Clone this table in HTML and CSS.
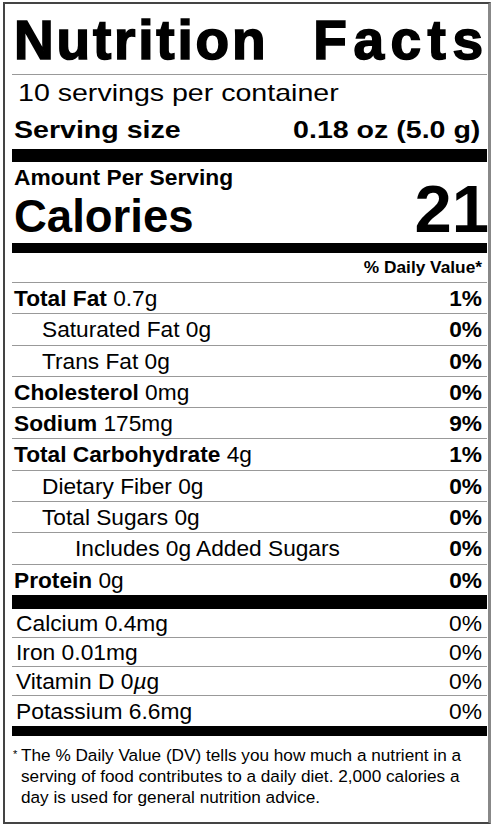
FILE: index.html
```html
<!DOCTYPE html>
<html>
<head>
<meta charset="utf-8">
<link rel="stylesheet" href="styles.css">
</head>
<body>
<div class="label">
  <div class="title"><span class="t1">Nutrition</span><span class="t2">Facts</span></div>
  <div class="servings"><span class="stretch">10 servings per container</span></div>
  <div class="size-row"><span class="stretch">Serving size</span><span class="stretch right">0.18 oz (5.0 g)</span></div>
  <div class="bar bar13"></div>
  <div class="amount">Amount Per Serving</div>
  <div class="calories"><span class="cal-label">Calories</span><span class="cal-num">21</span></div>
  <div class="bar bar10"></div>
  <div class="dvhead">% Daily Value*</div>
  <div class="row"><span><b>Total Fat</b> 0.7g</span><span class="dv">1%</span></div>
  <div class="row ind1"><span>Saturated Fat 0g</span><span class="dv">0%</span></div>
  <div class="row ind1"><span>Trans Fat 0g</span><span class="dv">0%</span></div>
  <div class="row"><span><b>Cholesterol</b> 0mg</span><span class="dv">0%</span></div>
  <div class="row"><span><b>Sodium</b> 175mg</span><span class="dv">9%</span></div>
  <div class="row"><span><b>Total Carbohydrate</b> 4g</span><span class="dv">1%</span></div>
  <div class="row ind1"><span>Dietary Fiber 0g</span><span class="dv">0%</span></div>
  <div class="row ind1"><span>Total Sugars 0g</span><span class="dv">0%</span></div>
  <div class="row ind2"><span>Includes 0g Added Sugars</span><span class="dv">0%</span></div>
  <div class="row last"><span><b>Protein</b> 0g</span><span class="dv">0%</span></div>
  <div class="bar bar14"></div>
  <div class="vrow"><span>Calcium 0.4mg</span><span>0%</span></div>
  <div class="vrow"><span>Iron 0.01mg</span><span>0%</span></div>
  <div class="vrow"><span>Vitamin D 0<i>µ</i>g</span><span>0%</span></div>
  <div class="vrow last"><span>Potassium 6.6mg</span><span>0%</span></div>
  <div class="bar bar10"></div>
  <p class="foot"><span class="star">*</span>The % Daily Value (DV) tells you how much a nutrient in a serving of food contributes to a daily diet. 2,000 calories a day is used for general nutrition advice.</p>
</div>
</body>
</html>
```

FILE: styles.css
```css
body {
  margin: 0;
  background: #fff;
  color: #000;
  font-family: "Liberation Sans", Arial, sans-serif;
}

.label {
  margin: 2px 0 0 3px;
  width: 475px;
  border: 2px solid #444;
  border-right: 3px solid #888;
  padding: 0 1px 0 7px;
}

.title {
  display: flex;
  justify-content: space-between;
  height: 68px;
  line-height: 68px;
  padding: 2px 4px 0 2px;
  font-size: 55px;
  font-weight: bold;
  -webkit-text-stroke: 1.6px #000;
  border-bottom: 1px solid #999;
}

.t1 { letter-spacing: 2.8px; }
.t2 { letter-spacing: 6.5px; margin-right: -6.5px; }

.servings {
  font-size: 24px;
  line-height: 36px;
  padding-left: 6px;
}

.stretch {
  display: inline-block;
  transform: scaleX(1.19);
  transform-origin: left center;
}

.stretch.right { transform-origin: right center; }

.size-row {
  display: flex;
  justify-content: space-between;
  font-size: 24px;
  font-weight: bold;
  line-height: 38px;
  padding: 0 7px 0 2px;
}

.bar { background: #000; }
.bar13 { height: 13px; }
.bar10 { height: 10px; }
.bar14 { height: 14px; }

.amount {
  font-size: 22.8px;
  font-weight: bold;
  line-height: 31px;
  padding-left: 2px;
}

.calories {
  display: flex;
  justify-content: space-between;
  align-items: baseline;
  height: 50px;
  padding: 0 0 0 2px;
  font-weight: bold;
}

.cal-label { font-size: 45.5px; line-height: 32px; }
.cal-num { font-size: 67px; line-height: 32px; margin-right: -2px; }

.dvhead {
  font-size: 17.3px;
  font-weight: bold;
  line-height: 29px;
  text-align: right;
  padding-right: 5px;
  border-bottom: 1px solid #999;
}

.row {
  display: flex;
  justify-content: space-between;
  font-size: 22.7px;
  height: 30.3px;
  line-height: 30.3px;
  padding: 0 5px 0 2px;
  border-bottom: 1px solid #999;
}

.row.last { border-bottom: none; }
.row.ind1 { padding-left: 30px; }
.row.ind2 { padding-left: 63px; }
.row .dv { font-weight: bold; }

.vrow {
  display: flex;
  justify-content: space-between;
  font-size: 22.8px;
  line-height: 28px;
  padding: 0 5px 0 4px;
  border-bottom: 1px solid #999;
}

.vrow.last { border-bottom: none; line-height: 30px; }

.foot {
  margin: 0;
  font-size: 17.2px;
  line-height: 21px;
  padding: 8px 8px 14px 9px;
  text-indent: -8px;
}

.star {
  display: inline-block;
  width: 8px;
  text-indent: 0;
  font-size: 11px;
  vertical-align: 3px;
}
```
